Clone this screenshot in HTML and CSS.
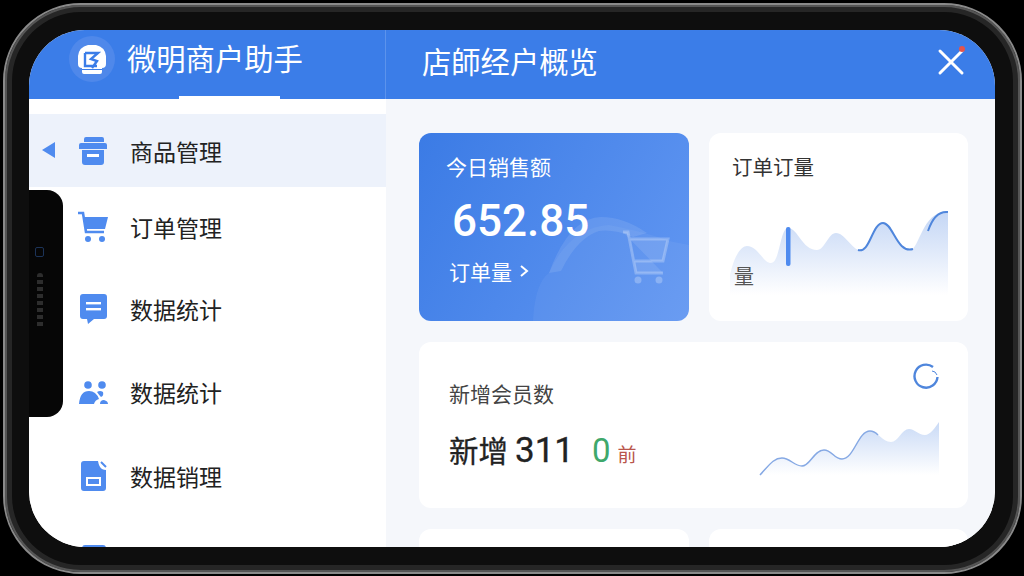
FILE: index.html
```html
<html>
<head>
<meta name="viewport" content="width=device-width,initial-scale=1.0">
<title>微明商户助手</title>
<link rel="stylesheet" href="styles.css">
</head>
<body>
<div class="phone">
<div class="screen">

<div class="top">
<div class="top-left">
<div class="logo">
<svg width="30" height="30" viewBox="0 0 30 30"><path d="M11 1 H19 Q28 3 29 12 V20 Q29 24 25 24 V28 Q25 30 23 30 H7 Q5 30 5 28 V24 Q1 24 1 20 V12 Q2 3 11 1 Z" fill="#fff"/><path d="M8 9 V22 H20 M8 9 H21 L14 15 L20 17 L15 24" fill="none" stroke="#3b7de8" stroke-width="2.400"/><path d="M5 25.500 H25" stroke="#3b7de8" stroke-width="1.200"/></svg>
</div>
<span class="app-name">微明商户助手</span>
<div class="tab-line"></div>
</div>
<div class="top-right">
<span class="page-name">店師经户概览</span>
<svg class="close" width="30" height="30" viewBox="0 0 30 30"><path d="M4 5 L26 27 M26 5 L4 27" stroke="#fff" stroke-width="3" stroke-linecap="round"/><circle cx="26" cy="3" r="3" fill="#e5544b"/></svg>
</div>
</div>

<div class="content">
<div class="side">
<div class="row active">
<span class="arrow"></span>
<svg class="ic" viewBox="0 0 32 32"><path d="M7 4 Q7 2 9 2 H25 Q27 2 27 4 V7 H7 Z M2 10 Q2 8 4 8 H28 Q30 8 30 10 V14 H2 Z M5 15 H27 V27 Q27 30 24 30 H8 Q5 30 5 27 Z" fill="#4f8bef"/><rect x="10" y="19" width="12" height="3" fill="#fff"/></svg>
<span>商品管理</span>
</div>
<div class="row">
<svg class="ic" viewBox="0 0 32 32"><path d="M1 2 H6 L9 21 H27" fill="none" stroke="#4f8bef" stroke-width="2.600"/><path d="M7 6 H31 L28 18 H9 Z" fill="#4f8bef"/><circle cx="11" cy="28" r="3" fill="#4f8bef"/><circle cx="25" cy="28" r="3" fill="#4f8bef"/></svg>
<span>订单管理</span>
</div>
<div class="row">
<svg class="ic" viewBox="0 0 32 32"><path d="M6 1 H27 Q30 1 30 4 V23 Q30 26 27 26 H17 L11 31 L10 26 H6 Q3 26 3 23 V4 Q3 1 6 1 Z" fill="#4f8bef"/><rect x="9" y="9" width="15" height="2.400" fill="#fff"/><rect x="9" y="15" width="15" height="2.400" fill="#fff"/></svg>
<span>数据统计</span>
</div>
<div class="row">
<svg class="ic" viewBox="0 0 32 32"><circle cx="11" cy="9" r="3.800" fill="#4f8bef"/><circle cx="25" cy="9" r="3.800" fill="#4f8bef"/><path d="M2 28 Q3 15 12 15 Q19 15 22 23 Q18 24 17 28 Z" fill="#4f8bef"/><path d="M20 16 Q23 14 26 16 Q27 20 24 21 Q22 19 20 16 Z" fill="#4f8bef"/><path d="M23 28 Q23 24 27 24 Q31 25 31 28 Z" fill="#4f8bef"/></svg>
<span>数据统计</span>
</div>
<div class="row">
<svg class="ic" viewBox="0 0 32 32"><path d="M7 1 H21 Q22 7 25 9 Q27 10 29 10 V28 Q29 31 26 31 H7 Q4 31 4 28 V4 Q4 1 7 1 Z" fill="#4f8bef"/><path d="M24 2 L29 7" stroke="#4f8bef" stroke-width="2"/><rect x="10" y="18" width="13" height="7" fill="none" stroke="#fff" stroke-width="2"/></svg>
<span>数据销理</span>
</div>
<div class="row">
<svg class="ic" viewBox="0 0 32 32"><path d="M8 4 H26 Q29 4 29 7 V28 H5 V7 Q5 4 8 4 Z" fill="#4f8bef"/></svg>
<span>收客員销理办公室</span>
</div>
</div>

<div class="main">
<div class="grid">
<div class="card sales">
<svg class="sales-bg" width="270" height="188" viewBox="0 0 270 188"><path d="M114 188 Q116 150 130 140 Q150 95 190 92 Q230 100 250 108 L270 112 V188 Z" fill="#fff" opacity=".05"/><path d="M130 140 Q150 85 182 84 Q205 84 228 100 L214 104 Q195 96 180 98 Q158 105 142 138 Z" fill="#fff" opacity=".1"/><path d="M204 99 H209 L217 140 H244 M211 106 H249 L244 128 H215" fill="#fff" fill-opacity=".1" stroke="#fff" stroke-opacity=".25" stroke-width="3"/><circle cx="219" cy="147" r="3.500" fill="#fff" opacity=".25"/><circle cx="240" cy="147" r="3.500" fill="#fff" opacity=".25"/></svg>
<div class="sales-label">今日销售额</div>
<div class="sales-num">652.85</div>
<div class="sales-link">订单量 <svg width="12" height="14" viewBox="0 0 12 14"><path d="M3 2 L9 7 L3 12" fill="none" stroke="#fff" stroke-width="2"/></svg></div>
</div>

<div class="card orders">
<div class="card-title">订单订量</div>
<div class="chart-wrap">
<svg width="218" height="87" viewBox="0 0 218 87">
<defs><linearGradient id="fa" x1="0" y1="0" x2="0" y2="1"><stop offset="0" stop-color="#c4d6f5"/><stop offset="1" stop-color="#fff"/></linearGradient></defs>
<path d="M0 67 C5 45 12 38 17 38 C28 38 33 55 41 55 C50 55 50 20 58 20 C68 20 72 42 87 42 C95 42 98 25 106 25 C115 25 122 42 130 42 C140 42 142 15 153 15 C163 15 167 43 180 42 C190 41 192 2 218 4 V87 H0 Z" fill="url(#fa)"/>
<path d="M128 42 C140 46 142 15 153 15 C163 15 167 46 183 41" fill="none" stroke="#4f86dc" stroke-width="2"/>
<path d="M198 23 C203 8 210 3 218 4" fill="none" stroke="#4f86dc" stroke-width="2"/>
<rect x="56" y="19" width="4.500" height="39" rx="2" fill="#4f8bef"/>
</svg>
<span class="stray">量</span>
</div>
</div>

<div class="card members">
<div class="members-left">
<div class="card-title members-title">新增会员数</div>
<div class="members-val"><span>新增</span><span class="num">311</span><span class="green">0</span><span class="red">前</span></div>
</div>
<div class="members-right">
<svg width="28" height="28" viewBox="0 0 28 28"><path d="M21 4 A11.500 11.500 0 1 0 25.500 14" fill="none" stroke="#4f86dc" stroke-width="2.400"/><path d="M20 8 L23 9 L25 12" fill="none" stroke="#4f86dc" stroke-width="1"/></svg>
<svg width="178" height="54" viewBox="0 0 178 54">
<defs><linearGradient id="fb" x1="0" y1="0" x2="0" y2="1"><stop offset="0" stop-color="#c9daf6"/><stop offset="1" stop-color="#fff"/></linearGradient></defs>
<path d="M-2 53 C8 42 12 36 20 36 C28 36 32 44 40 44 C48 44 52 28 62 28 C70 28 72 37 80 37 C92 37 96 9 108 9 C116 9 120 20 129 20 C136 20 140 7 147 7 C153 7 156 13 163 13 C168 13 173 6 177 0 V53 Z" fill="url(#fb)"/>
<path d="M-2 53 C8 42 12 36 20 36 C28 36 32 44 40 44 C48 44 52 28 62 28 C70 28 72 37 80 37 C92 37 96 9 108 9 C112 9 114 11 116 13" fill="none" stroke="#86a9e4" stroke-width="1.500"/>
</svg>
</div>
</div>

<div class="card small"><div class="card-title">数据分析报表</div></div>
<div class="card small"></div>
</div>
</div>
</div>

<div class="notch">
<span class="cam"></span>
<span class="speaker"></span>
</div>
</div>
</div>
</body>
</html>
```

FILE: styles.css
```css
*
{
box-sizing:border-box;
}
html,body
{
margin:0;
height:100%;
}
body
{
background:#000;
padding:3px 2px 2px 3px;
overflow:hidden;
font-family:"Noto Sans CJK SC","Liberation Sans",sans-serif;
}
.phone
{
height:571px;
background:#0e0e0e;
border:2px solid #8a8a8a;
border-radius:78px;
padding:25px 25px 25px 24px;
box-shadow:inset 0 0 0 2px #555,inset 0 0 0 7px #262626;
}
.screen
{
position:relative;
height:517px;
border-radius:56px;
overflow:hidden;
background:#fff;
display:flex;
flex-direction:column;
}

/* header */
.top
{
display:flex;
height:69px;
background:#3b7de8;
flex:none;
}
.top-left
{
position:relative;
width:357px;
display:flex;
align-items:center;
padding:0 0 14px 40px;
gap:12px;
border-right:1px solid #5c93ec;
}
.logo
{
width:46px;
height:46px;
margin-top:3px;
border-radius:50%;
background:#4f88ea;
display:flex;
align-items:center;
justify-content:center;
}
.app-name,.page-name
{
color:#fff;
font-size:29.300px;
line-height:1;
}
.tab-line
{
position:absolute;
left:150px;
bottom:0;
width:101px;
height:3px;
background:#fff;
}
.top-right
{
flex:1;
display:flex;
align-items:center;
justify-content:space-between;
padding:0 29px 8px 36px;
}

/* body */
.content
{
flex:1;
display:flex;
min-height:0;
}
.side
{
width:357px;
flex:none;
padding-top:15px;
background:#fff;
}
.row
{
position:relative;
height:82px;
display:flex;
align-items:center;
padding-left:48px;
gap:21px;
font-size:23px;
color:#222;
white-space:nowrap;
}
.row.active
{
height:73px;
background:#edf2fb;
}
.row:nth-child(2)
{
height:80px;
}
.row:nth-child(3)
{
height:84px;
}
.row:nth-child(5)
{
height:86px;
}
.row:nth-child(6)
{
height:76px;
}
.ic
{
width:32px;
height:32px;
flex:none;
}
.arrow
{
position:absolute;
left:13px;
top:28px;
border-style:solid;
border-width:8px 13px 8px 0;
border-color:transparent #4f8bef transparent transparent;
}
.main
{
flex:1;
background:#f5f7fb;
padding:34px 27px 0 33px;
overflow:hidden;
}
.grid
{
display:grid;
grid-template-columns:270px 259px;
grid-template-rows:188px 166px 60px;
gap:21px 20px;
}
.card
{
position:relative;
background:#fff;
border-radius:12px;
}
.card-title
{
font-size:20.500px;
line-height:28px;
color:#333;
}

/* sales card */
.sales
{
background:linear-gradient(120deg,#3b7be5,#6297f2);
color:#fff;
padding:19px 27px;
overflow:hidden;
}
.sales-bg
{
position:absolute;
left:0;
top:0;
}
.sales-label
{
position:relative;
font-size:21px;
line-height:28px;
}
.sales-num
{
position:relative;
font-family:Roboto,"Liberation Sans",sans-serif;
font-weight:500;
font-size:44px;
line-height:50px;
margin:16px 0 0 6px;
}
.sales-link
{
position:relative;
font-size:21px;
line-height:28px;
margin:11px 0 0 3px;
display:flex;
align-items:center;
gap:6px;
}

/* orders card */
.orders
{
padding:19px 20px 0 23px;
}
.chart-wrap
{
position:relative;
margin:28px 0 0 -2px;
}
.chart-wrap svg
{
display:block;
}
.stray
{
position:absolute;
left:4px;
top:54px;
font-size:20px;
line-height:28px;
color:#555;
}

/* members card */
.members
{
grid-column:1 / 3;
display:flex;
justify-content:space-between;
padding:37px 28px 0 30px;
}
.members-title
{
color:#444;
font-size:21px;
}
.members-val
{
display:flex;
align-items:baseline;
margin-top:19px;
font-size:29.500px;
line-height:46px;
color:#222;
-webkit-text-stroke:.3px #222;
}
.num
{
font-family:Roboto,"Liberation Sans",sans-serif;
font-size:35px;
margin-left:7px;
}
.green
{
font-family:Roboto,"Liberation Sans",sans-serif;
font-size:33px;
color:#3fa86b;
margin-left:18px;
-webkit-text-stroke:0;
}
.red
{
font-size:19px;
color:#b9564c;
margin-left:7px;
-webkit-text-stroke:0;
}
.members-right
{
display:flex;
flex-direction:column;
align-items:flex-end;
margin-top:-16px;
}
.members-right svg:last-child
{
margin-top:31px;
overflow:visible;
}

/* cut off rows */
.small
{
padding:13px 20px;
}

/* notch */
.notch
{
position:absolute;
left:0;
top:160px;
width:34px;
height:227px;
background:#060606;
border-radius:0 16px 16px 0;
}
.cam
{
position:absolute;
left:6px;
top:57px;
width:9px;
height:10px;
border:1.500px solid #1c3358;
border-radius:2px;
}
.speaker
{
position:absolute;
left:8px;
top:83px;
width:6px;
height:56px;
background:repeating-linear-gradient(#2d2d2d 0 4px,#060606 4px 7px);
border-radius:3px;
}
```
